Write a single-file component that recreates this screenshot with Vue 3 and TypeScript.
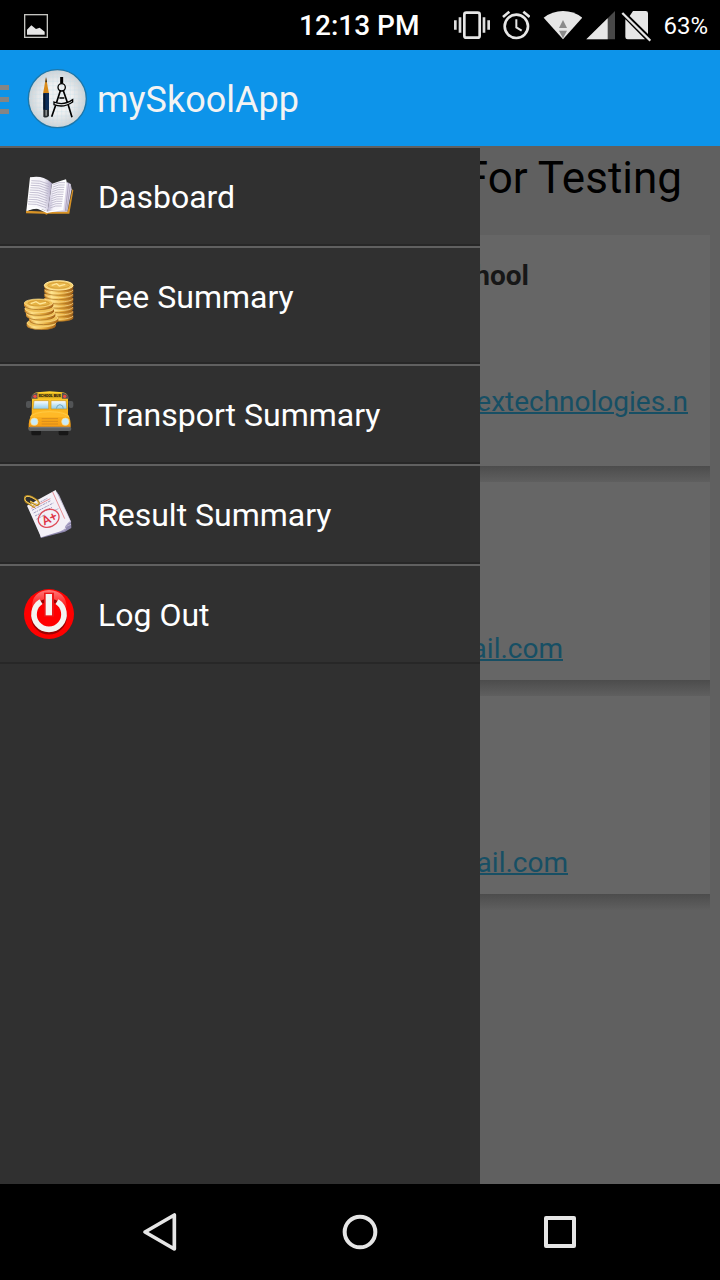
<script setup lang="ts">
interface MenuItem {
  id: string
  label: string
  tall?: boolean
}

const menu: MenuItem[] = [
  { id: 'dashboard', label: 'Dasboard' },
  { id: 'fee', label: 'Fee Summary', tall: true },
  { id: 'transport', label: 'Transport Summary' },
  { id: 'result', label: 'Result Summary' },
  { id: 'logout', label: 'Log Out' },
]

const lines = [0, 1, 2, 3, 4, 5, 6, 7, 8, 9, 10]
const grid = [0, 1, 2, 3, 4, 5, 6, 7, 8, 9, 10, 11, 12]
const tallStack = [138, 125, 112, 99, 86, 73, 60, 47]
const shortStack = [
  { x: 94, y: 162 },
  { x: 101, y: 147 },
  { x: 92, y: 133 },
  { x: 88, y: 119 },
  { x: 86, y: 102 },
]
</script>

<template>
  <div class="screen">
    <header class="status">
      <svg class="shot" viewBox="0 0 72 72" aria-hidden="true">
        <rect x="2" y="2" width="68" height="68" fill="none" stroke="#c4c4c0" stroke-width="4" />
        <path d="M9 62V47L22 34L36 45L47 41L62 53V62Z" fill="#e6e6e6" />
      </svg>
      <time class="clock">12:13 PM</time>
      <div class="tray">
        <svg width="36" height="32" viewBox="42 30 108 96" aria-hidden="true">
          <rect x="73" y="38" width="46" height="75" rx="6" fill="none" stroke="#e6e6e6" stroke-width="8" />
          <path d="M46 61V89M146 61V89M60 52V98M132 52V98" stroke="#dedede" stroke-width="8" />
        </svg>
        <svg width="28" height="32" viewBox="191 30 84 96" aria-hidden="true">
          <circle cx="234" cy="79" r="35" fill="none" stroke="#e6e6e6" stroke-width="8" />
          <path d="M234 58V82L250 92" fill="none" stroke="#e6e6e6" stroke-width="6" />
          <path d="M194 51L213 35M274 51L255 35" stroke="#e6e6e6" stroke-width="8" />
        </svg>
        <div class="radio">
          <svg width="40" height="32" viewBox="309 30 120 96" aria-hidden="true">
            <path d="M314 53Q340 33 372 33Q404 33 430 53L372 118Z" fill="#e6e6e6" />
            <path d="M372 60L384 84H360ZM360 92H384L372 115Z" fill="#8b8b8b" />
          </svg>
          <svg width="31" height="32" viewBox="439 30 93 96" aria-hidden="true">
            <path d="M526 33V118H440Z" fill="#484848" />
            <path d="M504 55V118H440Z" fill="#e6e6e6" />
          </svg>
          <svg width="30" height="32" viewBox="546 30 90 96" aria-hidden="true">
            <path d="M582 33H620Q627 33 627 40V102L572 48ZM559 58L618 118H566Q559 118 559 111Z" fill="#e6e6e6" />
            <path d="M550 39L634 122" stroke="#e6e6e6" stroke-width="7" />
          </svg>
        </div>
        <span class="battery">63%</span>
      </div>
    </header>

    <div class="appbar">
      <button class="burger" type="button" aria-label="Toggle navigation">
        <span></span><span></span><span></span>
      </button>
      <svg class="logo" viewBox="81 207 180 180" aria-hidden="true">
        <defs>
          <radialGradient id="disc"><stop offset="0.5" stop-color="#f0f1f2" /><stop offset="1" stop-color="#cbd1d5" /></radialGradient>
          <clipPath id="disc-clip"><circle cx="172" cy="296" r="83" /></clipPath>
        </defs>
        <circle cx="172" cy="296" r="87" fill="url(#disc)" stroke="#1c77aa" stroke-width="4" />
        <g clip-path="url(#disc-clip)" stroke="#c3dfe8" stroke-width="1">
          <path v-for="n in grid" :key="n" :d="`M${94 + n * 13} 210V382M86 ${218 + n * 13}H258`" />
        </g>
        <path d="M138 232L147 281H129Z" fill="#d98a18" />
        <path d="M138 231L141 247H136Z" fill="#2a2118" />
        <path d="M130 279H147V330H130Z" fill="#0c2c57" />
        <path d="M130 281H136V329H130Z" fill="#061529" />
        <path d="M130 329H147V348Q138 356 130 350Z" fill="#272b2e" />
        <path d="M136 330H141V347H136Z" fill="#858a8c" />
        <path d="M185 231V250" stroke="#000" stroke-width="9" />
        <circle cx="185" cy="262" r="11" fill="none" stroke="#000" stroke-width="4" />
        <path d="M181 272L167 316L155 350M190 272L205 316L216 352M178 294H193" fill="none" stroke="#000" stroke-width="5" />
        <path d="M162 306Q191 318 218 299V306Q191 325 162 314Z" fill="#e5e8e9" stroke="#000" stroke-width="4" />
      </svg>
      <h1>mySkoolApp</h1>
    </div>

    <div class="body">
      <main class="content">
        <h2>For Testing</h2>
        <section class="card first">
          <strong>School</strong>
          <a class="site" href="#site">extechnologies.n</a>
        </section>
        <section class="card">
          <a class="mail" href="#mail">gmail.com</a>
        </section>
        <section class="card">
          <a class="mail wide" href="#contact">gmail.com</a>
        </section>
      </main>

      <nav class="drawer" aria-label="Main menu">
        <button v-for="item in menu" :key="item.id" type="button" class="item" :class="{ tall: item.tall }">
          <svg v-if="item.id === 'dashboard'" viewBox="42 33 150 150" aria-hidden="true">
            <defs>
              <linearGradient id="page-l"><stop offset="0" stop-color="#fff" /><stop offset="0.7" stop-color="#f2f0f8" /><stop offset="1" stop-color="#a9a1c0" /></linearGradient>
              <linearGradient id="page-r"><stop offset="0" stop-color="#b5aecb" /><stop offset="0.3" stop-color="#f5f3fa" /><stop offset="1" stop-color="#fff" /></linearGradient>
            </defs>
            <path d="M48 152L110 155L173 154L187 88L190 91L178 161L114 161L110 164L103 161L48 160Z" fill="#d89326" />
            <path d="M170 66L182 72L185 88L172 155L112 156Z" fill="#dcd6e8" />
            <path d="M176 68L166 153M181 76L170 153" stroke="#958ba9" stroke-width="2" />
            <path d="M60 52Q84 47 101 54Q118 60 126 70L112 158Q101 145 81 146Q63 146 49 153Z" fill="url(#page-l)" />
            <path d="M126 71Q144 65 168 58L170 65L160 151Q137 147 112 157Z" fill="url(#page-r)" />
            <g fill="none" stroke="#aaa4bd" stroke-width="2">
              <path v-for="n in lines" :key="n" :d="`M${64 - n} ${62 + n * 7}Q${88 - n} ${59 + n * 7} ${118 - n} ${73 + n * 7}M${130 - n} ${74 + n * 7}Q${147 - n} ${65 + n * 7} ${165 - n} ${68 + n * 7}`" />
            </g>
            <path d="M51 150L78 142L111 157L155 149" fill="none" stroke="#fff" stroke-width="4" />
          </svg>

          <svg v-else-if="item.id === 'fee'" viewBox="42 30 150 150" aria-hidden="true">
            <defs>
              <linearGradient id="gold"><stop offset="0" stop-color="#d28a27" /><stop offset="0.25" stop-color="#ffe38a" /><stop offset="0.6" stop-color="#e5ab3c" /><stop offset="1" stop-color="#a56016" /></linearGradient>
            </defs>
            <g v-for="y in tallStack" :key="y">
              <path :d="`M103 ${y - 2}V${y + 5}Q103 ${y + 15} 146 ${y + 16}Q190 ${y + 15} 190 ${y + 5}V${y - 2}Z`" fill="url(#gold)" />
              <path :d="`M104 ${y + 6}Q108 ${y + 15} 146 ${y + 16}Q184 ${y + 15} 189 ${y + 6}`" fill="none" stroke="#a66a1c" stroke-width="2" />
              <path :d="`M104 ${y}Q110 ${y + 9} 146 ${y + 10}Q184 ${y + 9} 189 ${y}`" fill="none" stroke="#ffe598" stroke-width="2" />
            </g>
            <ellipse cx="146" cy="46" rx="43" ry="14" fill="#f5cd68" stroke="#ffe7a0" stroke-width="3" />
            <ellipse cx="146" cy="46" rx="33" ry="9" fill="#e9b84c" stroke="#ca8e2b" stroke-width="2" />
            <path d="M125 46L140 41L148 48L166 43" fill="none" stroke="#ffe69a" stroke-width="4" />
            <g v-for="c in shortStack" :key="c.y">
              <path :d="`M${c.x - 44} ${c.y - 4}V${c.y + 5}Q${c.x - 41} ${c.y + 16} ${c.x} ${c.y + 17}Q${c.x + 41} ${c.y + 16} ${c.x + 44} ${c.y + 5}V${c.y - 4}Z`" fill="url(#gold)" />
              <ellipse :cx="c.x" :cy="c.y - 3" rx="43" ry="12" fill="#efc158" stroke="#ffe393" stroke-width="2" />
              <path :d="`M${c.x - 42} ${c.y + 6}Q${c.x - 37} ${c.y + 16} ${c.x} ${c.y + 17}Q${c.x + 37} ${c.y + 16} ${c.x + 42} ${c.y + 6}`" fill="none" stroke="#9b6019" stroke-width="2" />
            </g>
            <ellipse cx="86" cy="100" rx="32" ry="8" fill="#e5b345" stroke="#c98c29" stroke-width="2" />
            <path d="M62 101L78 95L90 102L108 97" fill="none" stroke="#ffe69a" stroke-width="4" />
          </svg>

          <svg v-else-if="item.id === 'transport'" viewBox="42 27 150 150" aria-hidden="true">
            <defs>
              <linearGradient id="bus" x2="0" y2="1"><stop offset="0" stop-color="#ffd32d" /><stop offset="1" stop-color="#f79a12" /></linearGradient>
              <linearGradient id="glass" x2="0" y2="1"><stop offset="0" stop-color="#fff" /><stop offset="1" stop-color="#8ecceb" /></linearGradient>
            </defs>
            <rect x="64" y="148" width="29" height="18" rx="5" fill="#171717" />
            <rect x="146" y="148" width="29" height="18" rx="5" fill="#171717" />
            <path d="M63 66H55M175 66H183" stroke="#555" stroke-width="4" />
            <rect x="48" y="63" width="15" height="21" rx="6" fill="#525456" />
            <rect x="176" y="63" width="14" height="21" rx="6" fill="#525456" />
            <path d="M66 50Q68 39 82 37L119 34L157 37Q172 39 174 50V108Q183 113 182 146H56Q55 114 65 108Z" fill="url(#bus)" />
            <path d="M63 54Q64 40 83 38V56H63ZM156 38Q175 40 177 54V56H156Z" fill="#595152" />
            <circle cx="75" cy="49" r="5" fill="#f14b44" />
            <circle cx="164" cy="49" r="5" fill="#f14b44" />
            <rect x="83" y="40" width="73" height="15" fill="#d9a91e" />
            <text x="119" y="52" text-anchor="middle" font-family="Roboto, sans-serif" font-size="11" font-weight="900" fill="#18140b">SCHOOL BUS</text>
            <path d="M72 62H116V87H69ZM123 62H168L171 87H123Z" fill="url(#glass)" stroke="#c9951f" stroke-width="2" />
            <path d="M139 86Q140 74 150 74Q160 75 160 86" fill="none" stroke="#75a6be" stroke-width="3" />
            <path d="M61 112Q64 91 119 91Q174 91 178 112" fill="#ffb927" />
            <path d="M60 112Q70 96 119 95Q169 96 178 112" fill="none" stroke="#ffd24f" stroke-width="2" />
            <path d="M95 116H144M95 124H144M95 132H144" stroke="#d88c1d" stroke-width="3" />
            <circle cx="73" cy="125" r="11" fill="#c8ecfa" stroke="#ffe08f" stroke-width="2" />
            <circle cx="166" cy="125" r="11" fill="#c8ecfa" stroke="#ffe08f" stroke-width="2" />
            <rect x="55" y="140" width="129" height="13" rx="6" fill="#5f6162" />
            <path d="M60 143H179" stroke="#8a8a8a" stroke-width="2" />
          </svg>

          <svg v-else-if="item.id === 'result'" viewBox="42 27 150 150" aria-hidden="true">
            <path d="M142 36L183 124L184 144L165 155L93 174L88 156Z" fill="#8e87ae" />
            <path d="M145 43L182 126L91 168M183 133L92 171" fill="none" stroke="#d6cfe3" stroke-width="2" />
            <path d="M51 77L137 30L181 123Q170 134 165 150L93 172Z" fill="#f3f0f7" />
            <path d="M181 123Q161 137 165 151L148 155Q169 149 181 123Z" fill="#a39bc1" />
            <path d="M128 36L164 116M64 85L121 56" fill="none" stroke="#e88f96" stroke-width="3" />
            <g fill="none" stroke="#a39dc2" stroke-width="3" stroke-dasharray="8 2 5 3">
              <path d="M68 78L112 55M66 91L122 62M71 99L130 69M75 108L126 82M79 118L105 104M133 92L145 86" />
            </g>
            <ellipse cx="116" cy="115" rx="32" ry="26" transform="rotate(-25 116 115)" fill="none" stroke="#df4c59" stroke-width="4" />
            <text x="118" y="128" text-anchor="middle" transform="rotate(-25 118 115)" font-family="Roboto, sans-serif" font-size="38" font-weight="500" fill="#df3445">A+</text>
            <path d="M75 83L48 66Q38 53 49 48Q62 45 84 63Q91 73 81 76L60 65" fill="none" stroke="#ae8222" stroke-width="5" />
            <path d="M75 81L48 64Q40 53 51 49Q64 48 83 64Q88 71 81 74L60 63" fill="none" stroke="#f7cf5c" stroke-width="3" />
          </svg>

          <svg v-else viewBox="42 27 150 150" aria-hidden="true">
            <defs>
              <linearGradient id="shine" x2="0" y2="1"><stop offset="0" stop-color="#ff7777" /><stop offset="1" stop-color="#ff1515" /></linearGradient>
            </defs>
            <circle cx="117" cy="102" r="75" fill="#f00" />
            <path d="M66 83Q65 34 117 30Q169 34 170 83Q115 64 66 83Z" fill="url(#shine)" />
            <circle cx="117" cy="110" r="45" fill="none" stroke="#9c0000" stroke-width="17" />
            <circle cx="117" cy="103" r="38" fill="#f00" />
            <path d="M93 65A45 45 0 1 0 141 65" fill="none" stroke="#f4f4f1" stroke-width="17" />
            <path d="M102 38H132V110H102Z" fill="#ed1717" />
            <path d="M107 42H126V106H107Z" fill="#f4f4f1" />
          </svg>
          <span>{{ item.label }}</span>
        </button>
      </nav>
    </div>

    <footer class="navbar">
      <button type="button" aria-label="Back">
        <svg viewBox="60 96 120 120"><path d="M75 156L163 105V207Z" fill="none" stroke="#e6e6e6" stroke-width="11" stroke-linejoin="round" /></svg>
      </button>
      <button type="button" aria-label="Home">
        <svg viewBox="660 96 120 120"><circle cx="720" cy="156" r="46" fill="none" stroke="#e6e6e6" stroke-width="12" /></svg>
      </button>
      <button type="button" aria-label="Recent apps">
        <svg viewBox="1260 96 120 120"><rect x="1278" y="114" width="84" height="84" fill="none" stroke="#e6e6e6" stroke-width="12" stroke-linejoin="round" /></svg>
      </button>
    </footer>
  </div>
</template>

<style>
body {
  margin: 0;
  background: #000;
}
</style>

<style scoped>
.screen {
  display: flex;
  flex-direction: column;
  min-height: 100vh;
  overflow: hidden;
  font-family: Roboto, "Noto Sans", sans-serif;
}
svg {
  display: block;
  flex: none;
}
button {
  margin: 0;
  padding: 0;
  border: 0;
  background: none;
  color: inherit;
  font: inherit;
}
.status {
  display: flex;
  align-items: center;
  height: 50px;
  padding: 2px 12px 0 24px;
  box-sizing: border-box;
  background: #000;
  color: #fff;
}
.shot {
  width: 24px;
  height: 24px;
}
.clock {
  margin-left: auto;
  margin-right: 35px;
  font-size: 28px;
  line-height: 36px;
  font-weight: 500;
}
.tray {
  display: flex;
  align-items: center;
  gap: 12px;
}
.radio {
  display: flex;
  gap: 4px;
}
.battery {
  font-size: 24px;
  line-height: 32px;
}
.appbar {
  display: flex;
  align-items: center;
  height: 96px;
  padding-top: 2px;
  box-sizing: border-box;
  background: #0d94ea;
  color: #f3f3f3;
}
.burger {
  display: flex;
  flex-direction: column;
  gap: 7px;
  width: 9px;
  margin-right: 18px;
}
.burger span {
  height: 5px;
  background: #858585;
}
.logo {
  width: 60px;
  height: 60px;
  margin-right: 10px;
}
h1 {
  margin: 0;
  padding-top: 2px;
  font-size: 36px;
  line-height: 48px;
  font-weight: 400;
}
.body {
  position: relative;
  display: flex;
  flex: 1;
  background: #606060;
}
.content {
  flex: 1;
  min-width: 0;
  display: flex;
  flex-direction: column;
  gap: 16px;
}
h2 {
  margin: 0;
  padding: 4px 38px 13px 0;
  text-align: right;
  font-size: 44px;
  line-height: 56px;
  font-weight: 400;
  color: #000;
}
.card {
  display: flex;
  flex-direction: column;
  align-items: flex-end;
  justify-content: flex-end;
  min-height: 198px;
  margin-right: 10px;
  padding-bottom: 15px;
  box-sizing: border-box;
  background: #666;
  position: relative;
  font-size: 28px;
  line-height: 32px;
}
.card::after {
  content: "";
  position: absolute;
  top: 100%;
  left: 0;
  right: 0;
  height: 16px;
  background: linear-gradient(#4c4c4c, #565656 50%, #5f5f5f);
}
.first {
  justify-content: space-between;
  min-height: 231px;
  padding: 25px 0 48px;
}
.card strong {
  margin-right: 181px;
  color: #171717;
}
.card a {
  color: #174f64;
  text-decoration: underline;
  text-decoration-thickness: 2px;
}
.site {
  margin-right: 22px;
}
.mail {
  margin-right: 147px;
}
.wide {
  margin-right: 142px;
}
.drawer {
  position: absolute;
  top: 0;
  bottom: 0;
  left: 0;
  width: 66.6667%;
  background: #303030;
  color: #fff;
}
.item {
  display: flex;
  align-items: center;
  gap: 24px;
  width: 100%;
  height: 100px;
  padding-left: 24px;
  border-top: 2px solid #606060;
  border-bottom: 2px solid #272727;
  box-sizing: border-box;
  font-size: 32px;
  text-align: left;
}
.item svg {
  width: 50px;
  height: 50px;
}
.item span {
  padding-top: 2px;
  line-height: 94px;
}
.tall {
  height: 118px;
}
.tall span {
  align-self: flex-start;
}
.navbar {
  display: flex;
  height: 96px;
  padding: 0 60px;
  background: #000;
}
.navbar button {
  display: flex;
  flex: 1;
  align-items: center;
  justify-content: center;
}
.navbar svg {
  width: 40px;
  height: 40px;
}
</style>
